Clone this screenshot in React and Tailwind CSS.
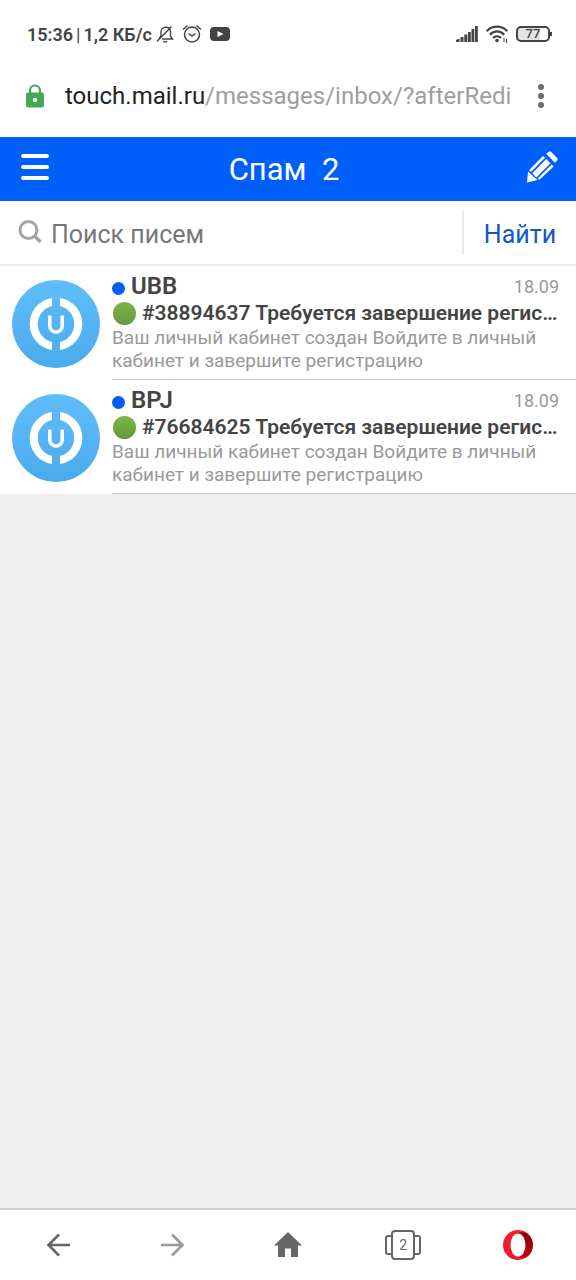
import { useState } from "react";

const letters = [
  { id: 1, from: "UBB", date: "18.09", subject: "#38894637 Требуется завершение регис…" },
  { id: 2, from: "BPJ", date: "18.09", subject: "#76684625 Требуется завершение регис…" },
];

const StatusBar = () => (
  <div className="flex h-14 items-center justify-between pt-3 pl-[27px] pr-6 text-[#444]">
    <div className="flex items-center">
      <span className="text-[18px] font-semibold">15:36</span>
      <span className="mx-[3px] text-[18px]">|</span>
      <span className="text-[18px] font-semibold">1,2 КБ/с</span>
      <svg className="ml-1 h-[18px] w-[18px]" viewBox="0 0 18 18" fill="none" stroke="currentColor" strokeWidth="1.4">
        <path d="M6 14h10.500l-2-3V7c0-3-2-4.800-4.700-4.800S5 4.200 5 7v4l-2 3M1 16.500 15.500 1.500" />
        <path d="M7.500 16c.5 1.300 3 1.300 3.500 0" />
      </svg>
      <svg className="ml-2 h-5 w-5" viewBox="0 0 20 20" fill="none" stroke="currentColor" strokeWidth="1.5">
        <circle cx="10" cy="10.500" r="7.500" />
        <path d="m6.500 9.500 3.500 2.500 3.500-2.500M1 5.500 5.500 1.500M14.500 1.500 19 5.500" />
      </svg>
      <svg className="ml-2 h-[14px] w-[20px]" viewBox="0 0 20 14">
        <rect width="20" height="14" rx="4" fill="currentColor" />
        <path d="m7.500 4 6 3-6 3z" fill="#fff" />
      </svg>
    </div>
    <div className="flex items-center gap-2">
      <svg className="h-4 w-[22px]" viewBox="0 0 22 16" fill="currentColor">
        <path d="M0 14 3.500 12.500V16H0zM4.500 11h3v5h-3zM8.300 8.500h3V16h-3zM12 6h2.800v10H12zM15.500 3h2.800v13h-2.800zM19 0h2.800v16H19z" />
      </svg>
      <svg className="h-[18px] w-[22px]" viewBox="0 0 22 18" fill="none" stroke="currentColor" strokeWidth="2.200">
        <path d="M.7 6.200c5.500-6 15-6 20.600 0M3.800 9.700c4.300-4.500 10.200-4.500 14.400 0M7 13c2.300-2.300 5.700-2.300 8 0" />
        <circle cx="11" cy="15.500" r="1.800" fill="currentColor" stroke="none" />
        <path d="M18 13v4M20.500 14v4" strokeWidth="1" />
      </svg>
      <div className="flex items-center">
        <div className="flex h-4 w-[34px] items-center justify-center rounded-[5px] border-2 border-[#444] bg-gradient-to-r from-[#e4e4e4] from-75% to-white to-75% text-[13px] leading-3 font-medium">
          77
        </div>
        <div className="h-1 w-[2px] bg-[#444]" />
      </div>
    </div>
  </div>
);

const AddressBar = () => (
  <div className="flex h-[81px] items-center pb-[2px] pl-6 pr-[26px]">
    <svg className="h-6 w-5 shrink-0" viewBox="0 0 20 24">
      <path d="M6 9V6.500a5 5 0 0 1 10 0V9" fill="none" stroke="#43a853" strokeWidth="2.200" />
      <rect x="2" y="8.500" width="18" height="15" rx="2.500" fill="#43a853" />
      <circle cx="11" cy="16" r="2.200" fill="#fff" />
    </svg>
    <a href="#url" className="ml-[21px] flex-1 overflow-hidden text-[24px] whitespace-nowrap text-[#9e9e9e]">
      <span className="text-[#222]">touch.mail.ru</span>/messages/inbox/?afterRedi
    </a>
    <button type="button" aria-label="Меню браузера" className="flex w-[18px] flex-col items-center gap-[3px]">
      <span className="h-[6px] w-[6px] rounded-full bg-[#6b6b6b]" />
      <span className="h-[6px] w-[6px] rounded-full bg-[#6b6b6b]" />
      <span className="h-[6px] w-[6px] rounded-full bg-[#6b6b6b]" />
    </button>
  </div>
);

const Header = () => (
  <header className="flex h-16 items-center justify-between bg-[#005ff9] px-[18px] text-white">
    <button type="button" aria-label="Меню" className="flex w-[34px] flex-col items-center gap-[7px] pb-1">
      <span className="h-1 w-7 rounded-[2px] bg-white" />
      <span className="h-1 w-7 rounded-[2px] bg-white" />
      <span className="h-1 w-7 rounded-[2px] bg-white" />
    </button>
    <h1 className="pt-[2px] pr-2 text-[31px] whitespace-pre">Спам  2</h1>
    <button type="button" aria-label="Написать письмо" className="flex w-[34px] justify-end pb-1">
      <svg className="h-8 w-8" viewBox="0 0 32 32" fill="#fff">
        <path d="M1 31.500 2 20.500 11.500 29z" />
        <path d="m20.300 2.800 3-2.300h1.500l6.700 7v1.600l-2.700 2.600z" />
        <path d="m3 19.300 14-14.300 2 1.800L5 21z" />
        <path d="M6.300 22.300 20.300 8l4.200 4.200-14.200 14.200z" />
        <path d="M11.700 27.500 25.700 13.500l1.900 1.900-14.200 13.300z" />
      </svg>
    </button>
  </header>
);

const Search = () => {
  const [query, setQuery] = useState("");

  return (
    <form className="flex h-[65px] items-center border-b-2 border-[#ebebeb] bg-white pl-[18px]" onSubmit={(e) => e.preventDefault()}>
      <svg className="mb-[2px] h-6 w-6 shrink-0" viewBox="0 0 24 24" fill="none" stroke="#a3a3a3">
        <circle cx="10.500" cy="10" r="8.500" strokeWidth="3" />
        <path d="m16.500 16 6 6" strokeWidth="3.500" />
      </svg>
      <input
        type="text"
        aria-label="Поиск писем"
        placeholder="Поиск писем"
        value={query}
        onChange={(e) => setQuery(e.target.value)}
        className="ml-[9px] h-11 min-w-0 flex-1 pt-1 text-[25px] text-[#333] outline-none placeholder:text-[#777]"
      />
      <button type="submit" className="h-11 w-[114px] border-l-2 border-[#ebebeb] pt-1 text-[25px] text-[#1059c0]">
        Найти
      </button>
    </form>
  );
};

const Avatar = () => (
  <svg className="mt-[14px] h-[88px] w-[88px] shrink-0" viewBox="0 0 88 88">
    <defs>
      <linearGradient id="sky" x1="0" y1="0" x2="0" y2="1">
        <stop offset="0" stopColor="#5fbdf9" />
        <stop offset="1" stopColor="#4aabec" />
      </linearGradient>
    </defs>
    <circle cx="44" cy="44" r="44" fill="url(#sky)" />
    <path d="M40 18v8a18.500 18.500 0 0 0 0 36v8a26.300 26.300 0 0 1 0-52zM48 18v8a18.500 18.500 0 0 1 0 36v8a26.300 26.300 0 0 0 0-52z" fill="#fff" />
    <path d="M37.800 35.500v10.300a6.200 6.200 0 0 0 12.400 0V35.500" fill="none" stroke="#fff" strokeWidth="3.500" />
  </svg>
);

const Letter = ({ letter }) => (
  <li>
    <a href={`#letter-${letter.id}`} className="flex gap-3 bg-white pl-3">
      <Avatar />
      <div className="min-w-0 flex-1 border-b border-[#c8c8c8] pt-[6px] pb-[7px]">
        <div className="flex h-7 items-center justify-between pr-[17px]">
          <div className="flex items-center gap-[6px]">
            <span className="mt-1 h-[13px] w-[13px] rounded-full bg-[#005ff9]" />
            <span className="text-[24px] font-semibold text-[#444]">{letter.from}</span>
          </div>
          <span className="text-[18px] text-[#999]">{letter.date}</span>
        </div>
        <div className="flex h-[26px] items-center gap-[6px]">
          <span className="ml-[1px] h-[23px] w-[23px] shrink-0 rounded-full bg-gradient-to-b from-[#7ab648] to-[#64993b]" />
          <span className="truncate text-[21px] leading-[26px] font-semibold text-[#444]">{letter.subject}</span>
        </div>
        <p className="pr-6 text-[19px] leading-[23px] text-[#999]">
          Ваш личный кабинет создан Войдите в личный кабинет и завершите регистрацию
        </p>
      </div>
    </a>
  </li>
);

const BottomBar = () => (
  <nav className="grid h-[72px] grid-cols-5 items-center border-t-2 border-[#cfcfcf] bg-white text-[#666]">
    <button type="button" aria-label="Назад" className="flex justify-center">
      <svg className="h-6 w-6" viewBox="0 0 24 24" fill="none" stroke="currentColor" strokeWidth="2.600">
        <path d="M24 12H2M13 1.500 2.500 12 13 22.500" />
      </svg>
    </button>
    <button type="button" aria-label="Вперёд" className="flex justify-center text-[#999]">
      <svg className="h-6 w-6" viewBox="0 0 24 24" fill="none" stroke="currentColor" strokeWidth="2.600">
        <path d="M0 12h22M11 1.500 21.500 12 11 22.500" />
      </svg>
    </button>
    <button type="button" aria-label="Домой" className="flex justify-center">
      <svg className="h-[26px] w-7" viewBox="0 0 28 26" fill="currentColor">
        <path d="M14 0 28 13.500h-4V25h-7v-8.500h-6V25H4V13.500H0z" />
      </svg>
    </button>
    <button type="button" aria-label="Вкладки" className="flex items-center justify-center">
      <span className="h-5 w-[6px] rounded-l-[3px] border-2 border-r-0 border-[#666]" />
      <span className="flex h-[30px] w-6 items-center justify-center rounded-[4px] border-2 border-[#666] text-[14px]">2</span>
      <span className="h-5 w-[6px] rounded-r-[3px] border-2 border-l-0 border-[#666]" />
    </button>
    <button type="button" aria-label="Opera" className="flex justify-center">
      <svg className="h-[30px] w-[30px]" viewBox="0 0 30 30">
        <defs>
          <linearGradient id="operaLeft" x1="0" y1="0" x2="0" y2="1">
            <stop offset="0" stopColor="#ff1b2d" />
            <stop offset="1" stopColor="#e31b2d" />
          </linearGradient>
          <linearGradient id="operaRight" x1="0" y1="0" x2="0" y2="1">
            <stop offset="0" stopColor="#8e0000" />
            <stop offset="1" stopColor="#c00018" />
          </linearGradient>
        </defs>
        <circle cx="15" cy="15" r="15" fill="url(#operaLeft)" />
        <path d="M11 5.500C16 1 22 2 25 4a15 15 0 0 1 0 22c-3 2-9 3-14-1.500z" fill="url(#operaRight)" />
        <ellipse cx="15" cy="15" rx="7.500" ry="11.500" fill="#fff" />
      </svg>
    </button>
  </nav>
);

const App = () => {
  return (
    <div className="flex min-h-screen flex-col bg-white font-[Roboto,sans-serif]">
      <StatusBar />
      <AddressBar />
      <Header />
      <Search />
      <main className="flex-1 bg-[#efefef]">
        <ul>
          {letters.map((letter) => (
            <Letter key={letter.id} letter={letter} />
          ))}
        </ul>
      </main>
      <BottomBar />
    </div>
  );
};

export default App;
